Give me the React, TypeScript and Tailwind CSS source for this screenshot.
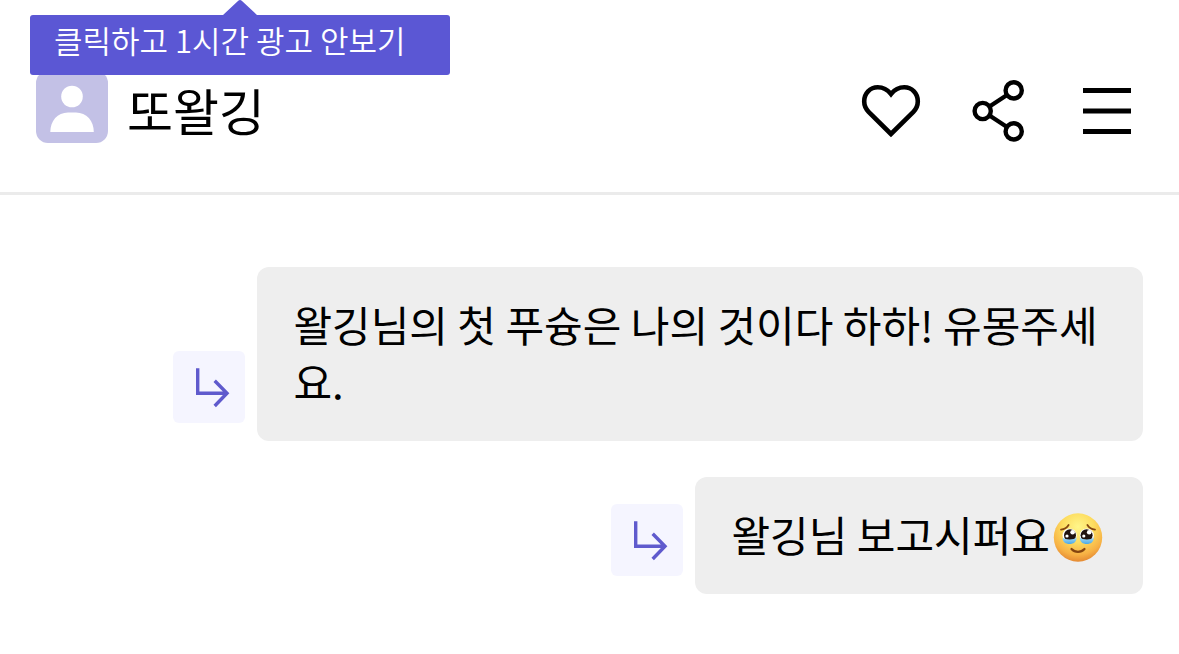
import type { ReactNode } from "react";

type Message = {
    id: number;
    text: string;
    emoji?: boolean;
};

const messages: Message[] = [
    { id: 1, text: "왈깅님의 첫 푸슝은 나의 것이다 하하! 유몽주세요." },
    { id: 2, text: "왈깅님 보고시퍼요", emoji: true },
];

function HeartIcon() {
    return (
        <svg viewBox="0 0 72 72" className="size-full" fill="none" stroke="currentColor" strokeWidth="4.6" aria-hidden="true">
            <path d="M36 59 L13.6 36.8 C10.8 34 9.2 30.5 9.2 26.3 C9.2 18.3 15 12.3 22.8 12.3 C28.4 12.3 32.6 14.8 36 19 C39.4 14.8 43.6 12.3 49.2 12.3 C57 12.3 62.8 18.3 62.8 26.3 C62.8 30.5 61.2 34 58.4 36.8 Z" />
        </svg>
    );
}

function ShareIcon() {
    return (
        <svg viewBox="0 0 72 72" className="size-full" fill="none" stroke="currentColor" strokeWidth="4.4" aria-hidden="true">
            <path d="M26.5 31.5 L44 20 M26.5 40.5 L44 52" />
            <circle cx="50.7" cy="15.4" r="8.1" />
            <circle cx="19.7" cy="36" r="8.1" />
            <circle cx="50.7" cy="56.4" r="8.1" />
        </svg>
    );
}

function MenuIcon() {
    return (
        <svg viewBox="0 0 72 72" className="size-full" stroke="currentColor" strokeWidth="5" aria-hidden="true">
            <path d="M12 15.5 H60 M12 36 H60 M12 56.5 H60" />
        </svg>
    );
}

function ReplyIcon() {
    return (
        <svg viewBox="0 0 72 72" className="size-full" fill="none" stroke="currentColor" strokeWidth="3.4" aria-hidden="true">
            <path d="M24.7 17.3 V42.3 H53 M41.7 29.7 L54 42.3 L41.7 55" />
        </svg>
    );
}

function Avatar() {
    return (
        <svg viewBox="0 0 72 72" className="-mt-2 size-18 rounded-xl bg-[#c3c1e6]" fill="white" aria-hidden="true">
            <circle cx="36" cy="25.5" r="10.8" />
            <path d="M14.3 61 C14.3 50 21.5 41.6 32 41.6 H40 C50.5 41.6 57.8 50 57.8 61 Z" />
        </svg>
    );
}

function TearyEmoji() {
    return (
        <svg viewBox="0 0 50 50" className="mr-1 ml-[3px] inline-block size-[50px] align-bottom" role="img" aria-label="🥹">
            <defs>
                <radialGradient id="face" cx="50%" cy="28%" r="72%">
                    <stop offset="0" stopColor="#fff68a" />
                    <stop offset="0.45" stopColor="#fddc5f" />
                    <stop offset="0.8" stopColor="#f7b144" />
                    <stop offset="1" stopColor="#e58a33" />
                </radialGradient>
                <linearGradient id="tear" x1="0" y1="0" x2="0" y2="1">
                    <stop offset="0" stopColor="#a9dcf5" />
                    <stop offset="1" stopColor="#4aa9e6" />
                </linearGradient>
            </defs>
            <circle cx="25" cy="25.5" r="24.2" fill="url(#face)" />
            <g fill="none" stroke="#84440f" strokeWidth="1.8" strokeLinecap="round">
                <path d="M8 17.6 C11 17.3 14 15.6 15.6 13" />
                <path d="M34.4 13 C36 15.6 39 17.3 42 17.6" />
            </g>
            <g>
                <circle cx="16.6" cy="23.6" r="7.1" fill="#fff" />
                <circle cx="17" cy="23.2" r="6" fill="#21130f" />
                <path d="M9.6 25.5 C12 28 21 28 23.6 25.5 C23.6 30 20.5 32 16.6 32 C12.5 32 9.6 30 9.6 25.5 Z" fill="url(#tear)" />
                <circle cx="19.6" cy="20.2" r="2.3" fill="#fff" />
                <circle cx="14" cy="24" r="1.6" fill="#fff" />
            </g>
            <g>
                <circle cx="33.8" cy="23.6" r="7.1" fill="#fff" />
                <circle cx="33.6" cy="23.2" r="6" fill="#21130f" />
                <path d="M26.8 25.5 C29.4 28 38.4 28 40.8 25.5 C40.8 30 37.8 32 33.8 32 C29.8 32 26.8 30 26.8 25.5 Z" fill="url(#tear)" />
                <circle cx="36.2" cy="20.2" r="2.3" fill="#fff" />
                <circle cx="30.8" cy="24" r="1.6" fill="#fff" />
            </g>
            <path d="M18.5 37 C22 40.8 28 40.8 31.5 37" fill="none" stroke="#84440f" strokeWidth="2.2" strokeLinecap="round" />
        </svg>
    );
}

function IconButton({ label, children }: { label: string; children: ReactNode }) {
    return (
        <button type="button" aria-label={label} className="size-18 shrink-0">
            {children}
        </button>
    );
}

function AdTooltip() {
    return (
        <div className="absolute top-0 left-[30px] w-[420px]">
            <svg viewBox="0 0 34 15" className="mx-auto block h-[15px] w-[34px]" fill="#5b57d4" aria-hidden="true">
                <path d="M0 15 L15 1 Q17 -1 19 1 L34 15 Z" />
            </svg>
            <button type="button" className="block w-full rounded-[3px] bg-[#5b57d4] px-6 pb-2.5 text-left text-[31px] leading-[50px] font-[350] text-white">
                클릭하고 1시간 광고 안보기
            </button>
        </div>
    );
}

function MessageRow({ message }: { message: Message }) {
    return (
        <li className="flex items-end justify-end gap-3">
            <button type="button" aria-label="답장" className="mb-[18px] size-18 shrink-0 rounded-md bg-[#f5f5ff] text-[#5f5acd]">
                <ReplyIcon />
            </button>
            <p className="max-w-4/5 rounded-xl bg-[#eeeeee] px-9 pt-7 pb-8 text-[42px] leading-[57px] break-all">
                {message.text}
                {message.emoji && <TearyEmoji />}
            </p>
        </li>
    );
}

export default function App() {
    return (
        <div className="relative bg-white font-['Noto_Sans_CJK_KR',sans-serif] text-black">
            {/* Header */}
            <header className="flex items-center justify-between border-b-3 border-[#ebebeb] px-9 pt-[75px] pb-[45px]">
                <div className="flex items-center gap-[19px]">
                    <Avatar />
                    <h1 className="pb-1 text-[50px] leading-[68px]">또왈깅</h1>
                </div>
                <nav className="flex gap-9">
                    <IconButton label="좋아요">
                        <HeartIcon />
                    </IconButton>
                    <IconButton label="공유">
                        <ShareIcon />
                    </IconButton>
                    <IconButton label="메뉴">
                        <MenuIcon />
                    </IconButton>
                </nav>
            </header>

            {/* Messages */}
            <main className="px-9 py-18">
                <ul className="flex flex-col gap-9">
                    {messages.map((message) => (
                        <MessageRow key={message.id} message={message} />
                    ))}
                </ul>
            </main>

            <AdTooltip />
        </div>
    );
}
